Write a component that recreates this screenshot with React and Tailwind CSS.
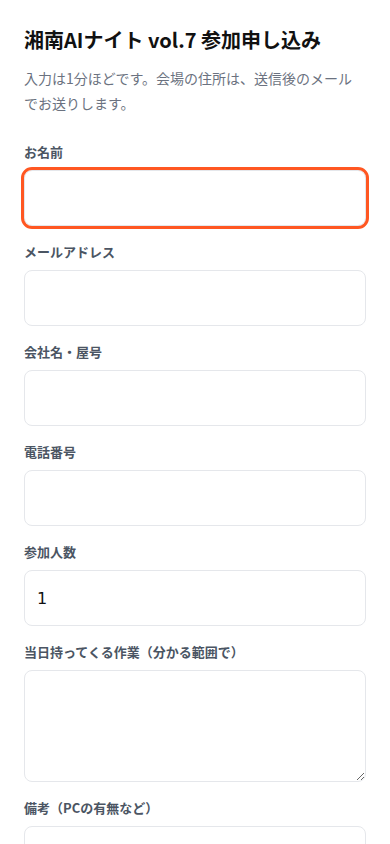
import { useState } from "react";

const fields = [
  { id: "name", label: "お名前", type: "text", focus: true },
  { id: "email", label: "メールアドレス", type: "email" },
  { id: "company", label: "会社名・屋号", type: "text" },
  { id: "tel", label: "電話番号", type: "tel" },
  { id: "count", label: "参加人数", type: "number", value: "1" },
];

export default function App() {
  const [form, setForm] = useState({ count: "1" });

  const update = (id) => (e) => setForm({ ...form, [id]: e.target.value });

  const inputCls =
    "block w-full h-14 rounded-lg border border-[#e5e7eb] bg-white px-3 text-[16px] text-[#111] [font-family:'DejaVu_Sans',sans-serif] outline-none";

  return (
    <div className="min-h-screen bg-white px-6 pt-6 [font-family:'Noto_Sans_CJK_JP','Noto_Sans',sans-serif]">
      <h1 className="text-[20px] leading-8 font-bold text-[#111]">湘南AIナイト vol.7 参加申し込み</h1>
      <p className="mt-[10px] text-[14px] leading-[25px] text-[#6b7280]">
        入力は1分ほどです。会場の住所は、送信後のメールでお送りします。
      </p>

      <form className="mt-[26px]">
        {fields.map((f) => (
          <div key={f.id} className="mb-4">
            <label htmlFor={f.id} className="block mb-2 text-[13px] leading-5 font-bold text-[#4b5563]">
              {f.label}
            </label>
            <input
              id={f.id}
              type={f.type === "number" ? "text" : f.type}
              value={form[f.id] || ""}
              onChange={update(f.id)}
              className={
                inputCls +
                (f.focus ? " outline-[3px] outline-solid outline-[#ff5722] outline-offset-0" : "")
              }
            />
          </div>
        ))}
        <div className="mb-4">
          <label htmlFor="work" className="block mb-2 text-[13px] leading-5 font-bold text-[#4b5563]">
            当日持ってくる作業（分かる範囲で）
          </label>
          <textarea
            id="work"
            className="block w-full h-28 rounded-lg border border-[#e5e7eb] bg-white px-3 py-2 text-[16px] outline-none"
          />
        </div>
        <div className="mb-4">
          <label htmlFor="note" className="block mb-2 text-[13px] leading-5 font-bold text-[#4b5563]">
            備考（PCの有無など）
          </label>
          <textarea
            id="note"
            className="block w-full h-28 rounded-lg border border-[#e5e7eb] bg-white px-3 py-2 text-[16px] outline-none"
          />
        </div>
      </form>
    </div>
  );
}
